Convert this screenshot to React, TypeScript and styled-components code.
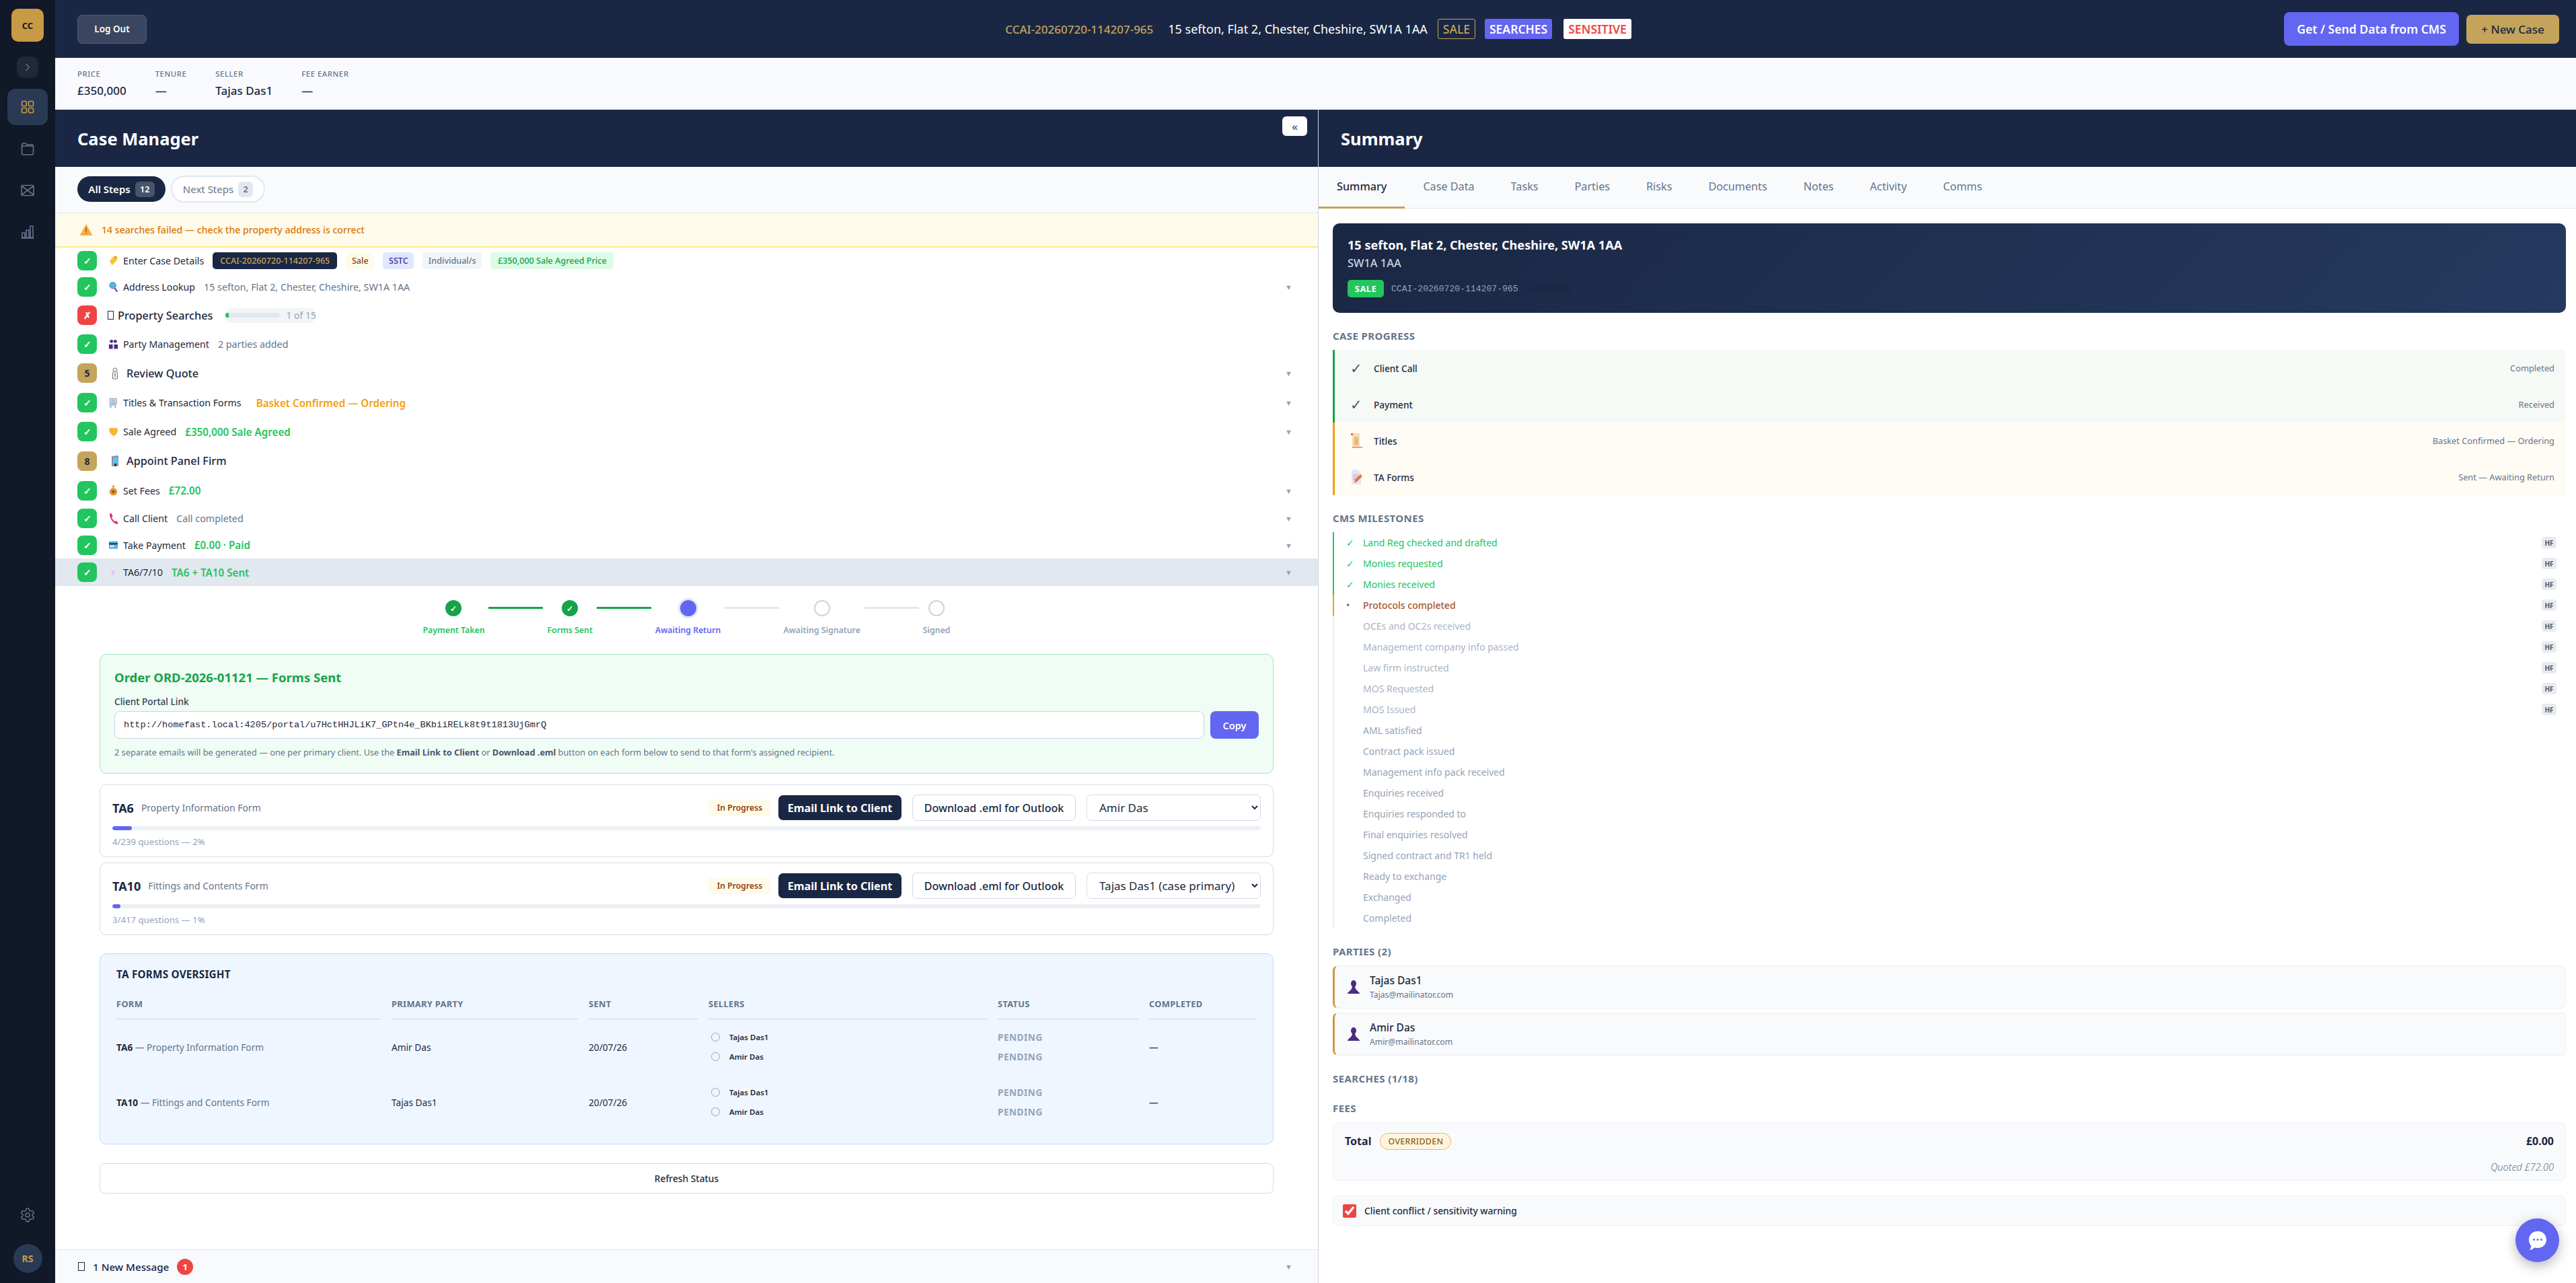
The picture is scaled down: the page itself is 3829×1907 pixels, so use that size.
import React from 'react';
import styled, { createGlobalStyle } from 'styled-components';
import { ChevronRight, Settings } from 'lucide-react';

const SANS = '"Noto Sans", "Open Sans", Arial, sans-serif';
const MONO = '"Liberation Mono", "DejaVu Sans Mono", monospace';
const NAVY = '#1a2744';
const GOLD = '#c4a35a';
const INDIGO = '#6366f1';

const Global = createGlobalStyle`
  html, body { margin: 0; padding: 0; height: 100%; background: #fff; }
  body { font-family: ${SANS}; font-size: 14px; color: #1e293b; overflow: hidden; }
  * { box-sizing: border-box; }
`;

const Shell = styled.div`display: flex; width: 100vw; height: 100vh; overflow: hidden;`;
const Side = styled.aside`
  width: 82px; flex: none; background: #111827; display: flex; flex-direction: column; align-items: center; padding: 13px 0 15px;
`;
const Logo = styled.div`
  width: 48px; height: 49px; border-radius: 10px; background: #c99a45; color: #111827; font-weight: 700; font-size: 13px;
  display: flex; align-items: center; justify-content: center;
`;
const Toggle = styled.div`
  width: 32px; height: 32px; margin-top: 22px; border-radius: 10px; background: #1f2937; color: #64748b; display: flex; align-items: center; justify-content: center;
`;
const NavList = styled.nav`display: flex; flex-direction: column; gap: 8px; margin-top: 16px;`;
const NavItem = styled.div<{ $active?: boolean }>`
  width: 60px; height: 54px; border-radius: 12px; display: flex; align-items: center; justify-content: center;
  background: ${p => (p.$active ? '#2a3a55' : 'transparent')}; color: ${p => (p.$active ? '#c99a45' : '#64748b')};
`;
const SideFoot = styled.div`margin-top: auto; display: flex; flex-direction: column; align-items: center; gap: 31px; color: #64748b;`;
const Avatar = styled.div`
  width: 43px; height: 43px; border-radius: 50%; background: #2a3a55; color: #c99a45; font-weight: 700; font-size: 14px; display: flex; align-items: center; justify-content: center;
`;

const Body = styled.div`flex: 1; min-width: 0; display: flex; flex-direction: column;`;
const TopBar = styled.header`
  height: 86px; flex: none; background: ${NAVY}; display: flex; align-items: center; padding: 0 25px 0 33px;
`;
const TopSide = styled.div<{ $end?: boolean }>`
  flex: 1; display: flex; align-items: center; gap: 11px; justify-content: ${p => (p.$end ? 'flex-end' : 'flex-start')};
`;
const LogOut = styled.button`
  width: 103px; height: 43px; border-radius: 7px; background: #3a465f; border: 1.5px solid #515c74; color: #fff; font: 600 13.5px ${SANS}; padding: 0;
`;
const TopCenter = styled.div`display: flex; align-items: center; color: #fff; white-space: nowrap;`;
const TopRef = styled.span`color: ${GOLD}; font-size: 17px; font-weight: 500; margin-right: 22px;`;
const TopAddr = styled.span`font-size: 18px; margin-right: 15px;`;
const TopPill = styled.span<{ $kind: 'sale' | 'search' | 'sens' }>`
  height: 30px; display: inline-flex; align-items: center; justify-content: center; padding: 0 7px; border-radius: 3px; margin-right: ${p => (p.$kind === 'sens' ? 0 : p.$kind === 'search' ? 17 : 14)}px;
  font-size: 17.5px; font-weight: ${p => (p.$kind === 'sale' ? 500 : 600)};
  color: ${p => (p.$kind === 'sale' ? GOLD : p.$kind === 'search' ? '#fff' : '#ef4444')};
  background: ${p => (p.$kind === 'sale' ? 'transparent' : p.$kind === 'search' ? INDIGO : '#fff')};
  border: ${p => (p.$kind === 'sale' ? `1px solid ${GOLD}` : 'none')};
`;
const CmsButton = styled.button`
  width: 260px; height: 50px; border: none; border-radius: 8px; background: ${INDIGO}; color: #fff; font: 600 17.6px ${SANS}; padding: 0;
`;
const NewCase = styled.button`
  width: 138px; height: 43px; border: none; border-radius: 7px; background: ${GOLD}; color: ${NAVY}; font: 500 17px ${SANS}; padding: 0;
`;

const InfoBar = styled.section`
  height: 77px; flex: none; background: #f8faff; display: flex; gap: 43px; padding: 16px 0 0 33px;
`;
const InfoCol = styled.div`display: flex; flex-direction: column;`;
const InfoLabel = styled.span`font-size: 11.4px; line-height: 16px; letter-spacing: 0.5px; color: #64748b; font-weight: 500;`;
const InfoValue = styled.span`font-size: 17px; line-height: 24px; margin-top: 5px; font-weight: 500; color: #1e293b;`;

const Main = styled.main`flex: 1; min-height: 0; display: flex;`;
const LeftPanel = styled.section`width: 1878px; flex: none; display: flex; flex-direction: column; border-right: 1px solid #cbd5e1;`;
const RightPanel = styled.section`flex: 1; min-width: 0; display: flex; flex-direction: column;`;
const PanelHead = styled.div`
  height: 85px; flex: none; background: ${NAVY}; display: flex; justify-content: space-between; padding: 0 16px 0 33px;
`;
const PanelTitle = styled.h2`margin: 0; color: #fff; font-size: 25.500px; font-weight: 700; line-height: 86px;`;
const Collapse = styled.button`
  width: 37px; height: 29px; margin-top: 10px; background: #fff; border: none; border-radius: 6px; color: #475569; font: 500 16px ${SANS}; padding: 0;
`;
const FilterBar = styled.div`
  height: 69px; flex: none; background: #f8fafc; border-bottom: 1px solid #e2e8f0; display: flex; align-items: center; gap: 8px; padding: 0 33px 2px;
`;
const Pill = styled.div<{ $on?: boolean }>`
  height: ${p => (p.$on ? 38 : 40)}px; width: ${p => (p.$on ? 131 : 140)}px; border-radius: 20px; display: flex; align-items: center; justify-content: center; gap: 7px;
  background: ${p => (p.$on ? NAVY : '#fff')}; color: ${p => (p.$on ? '#fff' : '#64748b')}; font-weight: ${p => (p.$on ? 600 : 400)}; font-size: 15px;
  border: ${p => (p.$on ? 'none' : '2px solid #e2e8f0')};
`;
const PillCount = styled.span<{ $on?: boolean }>`
  width: ${p => (p.$on ? 29 : 22)}px; height: 23px; border-radius: 6px; font-size: 12.500px; font-weight: 600; display: flex; align-items: center; justify-content: center;
  background: ${p => (p.$on ? '#475569' : '#e2e8f0')}; color: ${p => (p.$on ? '#fff' : '#64748b')};
`;
const Alert = styled.div`
  height: 51px; flex: none; background: #fffbeb; border-bottom: 2px solid #fde68a; display: flex; align-items: center; gap: 13px; padding: 0 36px; color: #d97706; font-size: 14.1px; font-weight: 500;
`;
const Scroll = styled.div`flex: 1; min-height: 0; overflow: hidden; display: flex; flex-direction: column;`;

const StepRow = styled.div<{ $h: number; $on?: boolean }>`
  height: ${p => p.$h}px; flex: none; display: flex; align-items: center; padding: 0 38px 0 33px; background: ${p => (p.$on ? '#e2e8f0' : 'transparent')};
`;
const StepBadge = styled.span<{ $c: 'ok' | 'bad' | 'num' }>`
  width: 29px; height: 29px; flex: none; border-radius: 8px; display: flex; align-items: center; justify-content: center; font-weight: 700; font-size: 14px;
  color: ${p => (p.$c === 'num' ? NAVY : '#fff')};
  background: ${p => (p.$c === 'ok' ? '#22c55e' : p.$c === 'bad' ? '#ef4444' : GOLD)};
`;
const StepIcon = styled.span<{ $big?: boolean }>`
  width: ${p => (p.$big ? 19 : 15)}px; height: 18px; margin: 0 ${p => (p.$big ? 8 : 7)}px 0 17px; display: flex; align-items: center; justify-content: center; flex: none;
`;
const TofuSlot = styled.span`width: 9px; margin: 0 6px 0 16px; display: flex; flex: none; color: ${NAVY};`;
const Tofu = styled.span<{ $size?: number }>`
  width: ${p => p.$size ?? 9}px; height: 13px; border: 1.5px solid currentColor; flex: none; display: inline-block;
`;
const StepTitle = styled.span<{ $big?: boolean }>`
  font-size: ${p => (p.$big ? 16.3 : 14.2)}px; font-weight: ${p => (p.$big ? 500 : 400)}; color: #1e293b; white-space: nowrap;
`;
const StepNote = styled.span<{ $tone?: 'green' | 'amber'; $gap?: number }>`
  margin-left: ${p => p.$gap ?? 13}px; white-space: nowrap;
  font-size: ${p => (p.$tone ? 15.2 : 14.3)}px;
  font-weight: ${p => (p.$tone ? 600 : 400)};
  color: ${p => (p.$tone === 'green' ? '#22c55e' : p.$tone === 'amber' ? '#f59e0b' : '#64748b')};
`;
const Tags = styled.div`display: flex; gap: 13px; margin-left: 13px;`;
const Tag = styled.span<{ $bg: string; $fg: string; $w: number }>`
  height: 25px; width: ${p => p.$w}px; border-radius: 5px; display: flex; align-items: center; justify-content: center; font-size: 12.6px; font-weight: 500; white-space: nowrap;
  background: ${p => p.$bg}; color: ${p => p.$fg};
`;
const MiniProgress = styled.div`
  height: 22px; width: 133px; margin-left: 19px; border-radius: 8px; background: #f1f5f9; display: flex; align-items: center; gap: 9px; color: #94a3b8; font-size: 14px; white-space: nowrap;
`;
const MiniTrack = styled.div`width: 81px; height: 7px; flex: none; border-radius: 4px; background: #e2e8f0; overflow: hidden;`;
const MiniFill = styled.div`width: 5px; height: 100%; background: #22c55e;`;
const Caret = styled.span`margin-left: auto; color: #94a3b8; font-size: 11px;`;

const Stepper = styled.div`display: flex; justify-content: center; padding-top: 21px; height: 101px; flex: none;`;
const StepItem = styled.div`display: flex; flex-direction: column; align-items: center; padding: 0 6px;`;
const Dot = styled.span<{ $s: 'done' | 'now' | 'todo' }>`
  width: 24px; height: 24px; border-radius: 50%; display: flex; align-items: center; justify-content: center; color: #fff; font-size: 12px; font-weight: 700;
  background: ${p => (p.$s === 'done' ? '#16a34a' : p.$s === 'now' ? INDIGO : '#fff')};
  border: ${p => (p.$s === 'todo' ? '2px solid #cbd5e1' : 'none')};
  box-shadow: ${p => (p.$s === 'now' ? '0 0 0 3px #e0e7ff' : 'none')};
`;
const DotLabel = styled.span<{ $s: 'done' | 'now' | 'todo' }>`
  margin-top: 12px; font-size: 12.3px; font-weight: 600; white-space: nowrap;
  color: ${p => (p.$s === 'done' ? '#22c55e' : p.$s === 'now' ? INDIGO : '#94a3b8')};
`;
const Link = styled.span<{ $done?: boolean }>`
  width: 81px; height: 3px; margin-top: 10px; flex: none; background: ${p => (p.$done ? '#16a34a' : '#e2e8f0')};
`;

const Cards = styled.div`padding: 0 66px; display: flex; flex-direction: column;`;
const OrderCard = styled.div`
  height: 178px; background: #f0fdf4; border: 1.5px solid #a7e3bd; border-radius: 10px; padding: 21px 21px 0 21px;
`;
const OrderTitle = styled.h3`margin: 0; font-size: 18.5px; line-height: 26px; font-weight: 700; color: #16a34a;`;
const FieldLabel = styled.div`margin-top: 13px; font-size: 13.6px; line-height: 20px; font-weight: 500; color: #334155;`;
const LinkRow = styled.div`display: flex; gap: 9px; margin-top: 4px;`;
const LinkInput = styled.input`
  flex: 1; height: 41px; border: 1.5px solid #cbd5e1; border-radius: 8px; background: #fff; padding: 0 13px; font: 13.6px ${MONO}; color: #1e293b;
`;
const CopyBtn = styled.button`
  width: 72px; height: 41px; border: none; border-radius: 8px; background: ${INDIGO}; color: #fff; font: 600 14.5px ${SANS}; padding: 0;
`;
const Hint = styled.p`margin: 10px 0 0; font-size: 12.75px; line-height: 20px; color: #64748b; b { font-weight: 700; color: #475569; }`;
const FormCard = styled.div<{ $mt: number }>`
  height: 108px; margin-top: ${p => p.$mt}px; border: 1.5px solid #d5dae3; border-radius: 10px; padding: 14px 18px 0;
`;
const FormHead = styled.div`display: flex; align-items: center; height: 39px;`;
const FormCode = styled.span`font-size: 18px; font-weight: 700; color: ${NAVY};`;
const FormName = styled.span`margin-left: 11px; font-size: 14px; color: #64748b;`;
const FormActions = styled.div`margin-left: auto; display: flex; align-items: center;`;
const Status = styled.span`
  width: 93px; height: 25px; margin-right: 11px; border-radius: 5px; background: #fffbeb; color: #92400e; font-size: 12.2px; font-weight: 600; display: flex; align-items: center; justify-content: center;
`;
const EmailBtn = styled.button`
  width: 183px; height: 37px; margin-right: 16px; border: none; border-radius: 7px; background: ${NAVY}; color: #fff; font: 700 16.2px ${SANS}; padding: 0;
`;
const EmlBtn = styled.button`
  width: 243px; height: 39px; margin-right: 16px; border: 1.5px solid #d5dae3; border-radius: 7px; background: #fff; color: ${NAVY}; font: 500 16.1px ${SANS}; padding: 0;
`;
const Recipient = styled.select`
  width: 259px; height: 39px; border: 1.5px solid #d5dae3; border-radius: 7px; background: #fff; color: #1e293b; font: 400 17px ${SANS}; padding: 0 14px;
`;
const Track = styled.div`height: 6px; margin-top: 8px; border-radius: 3px; background: #edf0f4; overflow: hidden;`;
const Fill = styled.div`height: 100%; border-radius: 3px; background: ${INDIGO};`;
const Questions = styled.div`margin-top: 7px; font-size: 13.2px; line-height: 20px; color: #94a3b8;`;

const Oversight = styled.div`
  height: 284px; margin-top: 27px; background: #eff6ff; border: 1.5px solid #bfdbfe; border-radius: 10px; padding: 20px 24px 0;
`;
const OverTitle = styled.h4`margin: 0; font-size: 15.3px; line-height: 20px; font-weight: 700; color: ${NAVY}; letter-spacing: 0.2px;`;
const OverGrid = styled.div`
  display: grid; grid-template-columns: 393px 277px 162px 414px 209px 1fr; column-gap: 16px; margin-top: 25px;
`;
const Th = styled.div`
  height: 32px; border-bottom: 1.5px solid #cbd5e1; font-size: 12.9px; font-weight: 700; letter-spacing: 0.3px; color: #64748b; padding-top: 0;
`;
const Td = styled.div`height: 82px; display: flex; align-items: center; font-size: 13.7px; color: #1e293b; white-space: nowrap;`;
const TdGrey = styled.span`color: #64748b;`;
const Stack = styled.div`display: flex; flex-direction: column; gap: 9px; justify-content: center; height: 82px;`;
const Seller = styled.div`height: 20px; display: flex; align-items: center; gap: 11px; font-size: 11.5px; font-weight: 600; color: #1e293b;`;
const Ring = styled.span`
  width: 20px; height: 20px; border-radius: 50%; background: #f1f5f9; display: flex; align-items: center; justify-content: center;
  &::after { content: ''; width: 11px; height: 11px; border: 1px solid #94a3b8; border-radius: 50%; }
`;
const Pending = styled.div`height: 20px; display: flex; align-items: center; font-size: 13.6px; font-weight: 700; letter-spacing: 0.5px; color: #94a3b8;`;
const Refresh = styled.button`
  height: 45px; margin-top: 28px; width: 100%; background: #fff; border: 1.5px solid #d5dae3; border-radius: 8px; color: #1e293b; font: 500 13.8px ${SANS};
`;
const MsgBar = styled.div`
  height: 50px; margin-top: auto; flex: none; background: #f8fafc; border-top: 1px solid #e2e8f0; display: flex; align-items: center; padding: 0 38px 0 34px; color: ${NAVY}; font-size: 15.2px; font-weight: 500;
`;
const MsgText = styled.span`margin-left: 12px;`;
const MsgCount = styled.span`
  width: 24px; height: 24px; margin-left: 12px; border-radius: 50%; background: #ef4444; color: #fff; font-size: 13px; font-weight: 700; display: flex; align-items: center; justify-content: center;
`;

const Tabs = styled.div`height: 62px; flex: none; background: #f8fafc; border-bottom: 1px solid #e2e8f0; display: flex;`;
const TabItem = styled.div<{ $on?: boolean }>`
  height: 62px; padding: 0 27px 1px; display: flex; align-items: center; font-size: 16.2px; font-weight: ${p => (p.$on ? 500 : 400)};
  color: ${p => (p.$on ? '#1e293b' : '#64748b')}; border-bottom: 3px solid ${p => (p.$on ? GOLD : 'transparent')};
`;
const SummaryBody = styled.div`flex: 1; min-height: 0; overflow: hidden; padding: 22px 15px 0 21px;`;
const Hero = styled.div`
  height: 133px; border-radius: 10px; background: linear-gradient(135deg, ${NAVY}, #253a5f); padding: 19px 22px 0;
`;
const HeroTitle = styled.div`font-size: 18.1px; line-height: 26px; font-weight: 700; color: #fff;`;
const HeroSub = styled.div`font-size: 16.4px; line-height: 24px; margin-top: 2px; font-weight: 500; color: #cbd5e1;`;
const HeroMeta = styled.div`display: flex; align-items: center; gap: 11px; margin-top: 13px;`;
const SaleBadge = styled.span`
  width: 54px; height: 26px; border-radius: 5px; background: #22c55e; color: #fff; font-size: 13px; font-weight: 700; letter-spacing: 0.4px; display: flex; align-items: center; justify-content: center;
`;
const HeroRef = styled.span`font: 13.1px ${MONO}; color: #94a3b8;`;
const HeroPrice = styled.span`font-size: 16px; font-weight: 700; color: ${NAVY};`;
const SectionLabel = styled.div`
  height: 20px; margin: 24px 0 11px; font-size: 15px; line-height: 20px; font-weight: 700; letter-spacing: 0.4px; color: #64748b;
`;
const ProgressRow = styled.div<{ $tone: 'green' | 'amber' }>`
  height: 54px; display: flex; align-items: center; padding: 0 17px 0 23px; font-size: 13.6px; font-weight: 500; color: #1e293b;
  border-left: 3px solid ${p => (p.$tone === 'green' ? '#16a34a' : '#f59e0b')};
  background: ${p => (p.$tone === 'green' ? '#f5faf6' : '#fffcf5')};
`;
const ProgressIcon = styled.span`width: 35px; flex: none; display: flex; color: #475569; font-size: 21px; font-weight: 400;`;
const ProgressNote = styled.span`margin-left: auto; font-size: 12.8px; font-weight: 400; color: #64748b;`;
const Mile = styled.div<{ $c: string }>`
  height: 31px; display: flex; align-items: center; border-left: 2px solid ${p => p.$c}; padding-right: 14px; font-size: 14px;
`;
const MileMark = styled.span<{ $tone: string }>`width: 43px; flex: none; padding-left: 18px; color: ${p => p.$tone}; font-size: 14px;`;
const MileText = styled.span<{ $tone: string; $strong?: boolean }>`color: ${p => p.$tone}; font-weight: ${p => (p.$strong ? 500 : 400)};`;
const HF = styled.span`
  margin-left: auto; width: 22px; height: 17px; border-radius: 4px; background: #e8ecf1; color: #475569; font-size: 10px; font-weight: 700; display: flex; align-items: center; justify-content: center;
`;
const Party = styled.div`
  height: 64px; margin-bottom: 6px; display: flex; align-items: center; background: #f8fafc; border: 1px solid #edf0f4; border-left: 3px solid #c99a45; border-radius: 8px; padding-left: 19px;
`;
const PartyText = styled.div`margin-left: 15px; display: flex; flex-direction: column;`;
const PartyName = styled.span`font-size: 15.5px; line-height: 24px; font-weight: 500; color: #1e293b;`;
const PartyMail = styled.span`font-size: 12.2px; line-height: 20px; color: #64748b;`;
const FeeCard = styled.div`
  height: 87px; background: #f8fafc; border: 1px solid #edf0f4; border-radius: 8px; padding: 14px 17px 0;
`;
const FeeTop = styled.div`display: flex; align-items: center; height: 26px;`;
const FeeTotal = styled.span`font-size: 16px; font-weight: 700; color: ${NAVY};`;
const Overridden = styled.span`
  width: 106px; height: 25px; margin-left: 13px; border-radius: 13px; border: 1px solid #e8b95a; background: #fef5e0; color: #92610e; font-size: 12.4px; font-weight: 500; letter-spacing: 0.3px; display: flex; align-items: center; justify-content: center;
`;
const FeeAmount = styled.span`margin-left: auto; font-size: 16px; font-weight: 700; color: ${NAVY};`;
const Quoted = styled.div`margin-top: 15px; text-align: right; font-size: 14.5px; font-style: italic; font-weight: 300; color: #64748b;`;
const WarnCard = styled.label`
  height: 45px; margin-top: 22px; display: flex; align-items: center; gap: 12px; background: #f8fafc; border: 1px solid #edf0f4; border-radius: 8px; padding-left: 14px; font-size: 13.8px; font-weight: 500; color: #1e293b;
`;
const WarnBox = styled.input`width: 20px; height: 20px; margin: 0; accent-color: #ef4444;`;
const Fab = styled.button`
  position: fixed; right: 25px; bottom: 31px; width: 65px; height: 65px; border: none; border-radius: 50%; background: ${INDIGO}; box-shadow: 0 6px 18px rgba(15, 23, 42, 0.3); display: flex; align-items: center; justify-content: center; padding: 0;
`;

const Ic = ({ children, w = 22, h = 22, vb = '0 0 24 24' }: { children: React.ReactNode; w?: number; h?: number; vb?: string }) => (
  <svg width={w} height={h} viewBox={vb} fill="none" stroke="currentColor" strokeWidth="1.6" strokeLinecap="round" strokeLinejoin="round">{children}</svg>
);
const GridIcon = () => (
  <Ic w={24} h={24}>
    <rect x="3.5" y="3.5" width="7" height="7" rx="1.5" /><rect x="13.5" y="3.5" width="7" height="7" rx="1.5" />
    <rect x="3.5" y="13.5" width="7" height="7" rx="1.5" /><rect x="13.5" y="13.5" width="7" height="7" rx="1.5" />
  </Ic>
);
const FolderIcon = () => (
  <Ic w={24} h={24}><path d="M4 8V5.5A1.5 1.5 0 0 1 5.5 4h3.5l2 2h7.5A1.5 1.5 0 0 1 20 7.5V8" /><path d="M3.5 8h17v11a2 2 0 0 1-2 2h-13a2 2 0 0 1-2-2z" /></Ic>
);
const MailIcon = () => (
  <Ic w={24} h={24}><rect x="3" y="4.5" width="18" height="15" rx="1.5" /><path d="M3 5.5l18 13M21 5.5L3 18.5" /></Ic>
);
const ChartIcon = () => (
  <Ic w={24} h={24}><path d="M3 21h18" /><rect x="4" y="13" width="4" height="7" /><rect x="10" y="9" width="4" height="11" /><rect x="16" y="3" width="4" height="17" /></Ic>
);
const Warn = () => (
  <svg width="20" height="19" viewBox="0 0 20 19"><path d="M10 1L19.5 18H.5z" fill="#f7b046" /><rect x="9.2" y="6" width="1.6" height="7" fill="#b3541e" /><rect x="9.2" y="14.3" width="1.6" height="1.6" fill="#b3541e" /></svg>
);
const E = ({ kind }: { kind: string }) => {
  const map: Record<string, React.ReactNode> = {
    tag: <><path d="M2 9L9 1h5v6l-8 9z" fill="#f9c23c" /><circle cx="11.5" cy="3.5" r="1.2" fill="#e8604c" /></>,
    search: <><circle cx="7" cy="6" r="5" fill="#5ab4e8" stroke="#3a7fb0" /><path d="M10 10l4 6" stroke="#7d4a9e" strokeWidth="2.6" /></>,
    people: <><circle cx="5" cy="4" r="2.6" fill="#4a2c82" /><circle cx="11" cy="4" r="2.6" fill="#4a2c82" /><path d="M1 16V9h6v7zM9 16V9h6v7z" fill="#4a2c82" /></>,
    person: <><circle cx="8" cy="4" r="3" fill="#fff" stroke="#777" /><path d="M4.5 17V9a3.5 3.5 0 0 1 7 0v8z" fill="#f3f3f3" stroke="#777" /><path d="M8 8v6" stroke="#555" /></>,
    cart: <><path d="M2 2h11v8H3z" fill="#dfe6ee" stroke="#8a98a8" /><path d="M4 5h8M4 8h8M6 2v8M9 2v8" stroke="#8a98a8" strokeWidth=".7" /><path d="M1 12h12" stroke="#6aa0d8" strokeWidth="1.4" /><circle cx="4" cy="15" r="1.3" fill="#6aa0d8" /><circle cx="11" cy="15" r="1.3" fill="#6aa0d8" /></>,
    shake: <path d="M1 4l5-2 3 1 5-1 1 5-2 5-4 4-4-3-3-4z" fill="#f9b52c" />,
    building: <><path d="M3 2l10-1v16H3z" fill="#8796a8" /><path d="M5 4h7v10H5z" fill="#58c4ef" /><path d="M7 13h3v4H7z" fill="#333" /></>,
    bag: <><path d="M6 1h4l-1 4H7z" fill="#e0a030" /><ellipse cx="8" cy="11" rx="6" ry="6" fill="#e09030" /><circle cx="8" cy="11" r="2.2" fill="#8a5a20" /></>,
    phone: <path d="M2 1l3-.5 2 5L5.5 7.5c1 2.5 3 4.8 5 5.8l2-1 3 3-1 2.5C8 17 2 9 2 1z" fill="#e0337a" />,
    card: <><rect x="1" y="3" width="14" height="12" rx="1" fill="#5ab4e8" /><rect x="1" y="6" width="14" height="2.4" fill="#2a3a55" /><rect x="3" y="10" width="6" height="2" fill="#fff" /></>,
    doc: <><path d="M3 1h7l3 3v13H3z" fill="#ece4f4" /><path d="M5 7h5M5 9.500h5M5 12h4" stroke="#b9b2c4" /></>,
  };
  return <svg width="16" height="18" viewBox="0 0 16 18">{map[kind]}</svg>;
};
const Scroll2 = () => (
  <svg width="20" height="24" viewBox="0 0 20 24"><path d="M3 1h11v20H3z" fill="#fbd9a8" /><path d="M1 1h3v3H1z" fill="#e8694a" /><path d="M3 21h15v2H3z" fill="#f59a7a" /><path d="M6 8h6M6 11h6M6 14h6M6 17h6" stroke="#b9764a" /></svg>
);
const DocPen = () => (
  <svg width="20" height="24" viewBox="0 0 20 24"><path d="M2 1h9l5 5v17H2z" fill="#e6e4f2" /><path d="M4 9h8M4 12h8M4 15h6" stroke="#a9a6b8" /><path d="M6 21l1-5 8-8 3 3-8 8z" fill="#f2703a" /></svg>
);
const Bust = () => (
  <svg width="18" height="20" viewBox="0 0 18 20"><ellipse cx="9" cy="5" rx="4" ry="5" fill="#4a2c82" /><path d="M7 9h4l1 4 6 6v1H0v-1l6-6z" fill="#4a2c82" /></svg>
);

type Row = { h: number; badge: 'ok' | 'bad' | 'num'; mark: string; icon?: string; title: string; big?: boolean; note?: string; tone?: 'green' | 'amber'; gap?: number; caret?: boolean; on?: boolean; tags?: boolean; progress?: boolean };
const rows: Row[] = [
  { h: 39, badge: 'ok', mark: '✓', icon: 'tag', title: 'Enter Case Details', tags: true },
  { h: 39, badge: 'ok', mark: '✓', icon: 'search', title: 'Address Lookup', note: '15 sefton, Flat 2, Chester, Cheshire, SW1A 1AA', caret: true },
  { h: 45, badge: 'bad', mark: '✗', title: 'Property Searches', big: true, progress: true },
  { h: 41, badge: 'ok', mark: '✓', icon: 'people', title: 'Party Management', note: '2 parties added' },
  { h: 45, badge: 'num', mark: '5', icon: 'person', title: 'Review Quote', big: true, caret: true },
  { h: 43, badge: 'ok', mark: '✓', icon: 'cart', title: 'Titles & Transaction Forms', note: 'Basket Confirmed — Ordering', tone: 'amber', gap: 22, caret: true },
  { h: 43, badge: 'ok', mark: '✓', icon: 'shake', title: 'Sale Agreed', note: '£350,000 Sale Agreed', tone: 'green', caret: true },
  { h: 44, badge: 'num', mark: '8', icon: 'building', title: 'Appoint Panel Firm', big: true },
  { h: 44, badge: 'ok', mark: '✓', icon: 'bag', title: 'Set Fees', note: '£72.00', tone: 'green', caret: true },
  { h: 39, badge: 'ok', mark: '✓', icon: 'phone', title: 'Call Client', note: 'Call completed', caret: true },
  { h: 40, badge: 'ok', mark: '✓', icon: 'card', title: 'Take Payment', note: '£0.00 · Paid', tone: 'green', caret: true },
  { h: 41, badge: 'ok', mark: '✓', icon: 'doc', title: 'TA6/7/10', note: 'TA6 + TA10 Sent', tone: 'green', caret: true, on: true },
];
const flow: { s: 'done' | 'now' | 'todo'; label: string }[] = [
  { s: 'done', label: 'Payment Taken' }, { s: 'done', label: 'Forms Sent' }, { s: 'now', label: 'Awaiting Return' }, { s: 'todo', label: 'Awaiting Signature' }, { s: 'todo', label: 'Signed' },
];
const forms = [
  { code: 'TA6', name: 'Property Information Form', width: 29, q: '4/239 questions — 2%', who: 'Amir Das', mt: 16 },
  { code: 'TA10', name: 'Fittings and Contents Form', width: 12, q: '3/417 questions — 1%', who: 'Tajas Das1 (case primary)', mt: 8 },
];
const oversight = [
  { code: 'TA6', name: 'Property Information Form', primary: 'Amir Das' },
  { code: 'TA10', name: 'Fittings and Contents Form', primary: 'Tajas Das1' },
];
const tabs = ['Summary', 'Case Data', 'Tasks', 'Parties', 'Risks', 'Documents', 'Notes', 'Activity', 'Comms'];
const miles = ['Land Reg checked and drafted', 'Monies requested', 'Monies received', 'Protocols completed', 'OCEs and OC2s received', 'Management company info passed', 'Law firm instructed', 'MOS Requested', 'MOS Issued', 'AML satisfied', 'Contract pack issued', 'Management info pack received', 'Enquiries received', 'Enquiries responded to', 'Final enquiries resolved', 'Signed contract and TR1 held', 'Ready to exchange', 'Exchanged', 'Completed'];

export default function App() {
  return (
    <Shell>
      <Global />
      <Side>
        <Logo>CC</Logo>
        <Toggle><ChevronRight size={20} strokeWidth={1.5} /></Toggle>
        <NavList>
          <NavItem $active><GridIcon /></NavItem>
          <NavItem><FolderIcon /></NavItem>
          <NavItem><MailIcon /></NavItem>
          <NavItem><ChartIcon /></NavItem>
        </NavList>
        <SideFoot>
          <Settings size={24} strokeWidth={1.5} />
          <Avatar>RS</Avatar>
        </SideFoot>
      </Side>
      <Body>
        <TopBar>
          <TopSide><LogOut>Log Out</LogOut></TopSide>
          <TopCenter>
            <TopRef>CCAI-20260720-114207-965</TopRef>
            <TopAddr>15 sefton, Flat 2, Chester, Cheshire, SW1A 1AA</TopAddr>
            <TopPill $kind="sale">SALE</TopPill>
            <TopPill $kind="search">SEARCHES</TopPill>
            <TopPill $kind="sens">SENSITIVE</TopPill>
          </TopCenter>
          <TopSide $end>
            <CmsButton>Get / Send Data from CMS</CmsButton>
            <NewCase>+ New Case</NewCase>
          </TopSide>
        </TopBar>
        <InfoBar>
          <InfoCol><InfoLabel>PRICE</InfoLabel><InfoValue>£350,000</InfoValue></InfoCol>
          <InfoCol><InfoLabel>TENURE</InfoLabel><InfoValue>—</InfoValue></InfoCol>
          <InfoCol><InfoLabel>SELLER</InfoLabel><InfoValue>Tajas Das1</InfoValue></InfoCol>
          <InfoCol><InfoLabel>FEE EARNER</InfoLabel><InfoValue>—</InfoValue></InfoCol>
        </InfoBar>
        <Main>
          <LeftPanel>
            <PanelHead><PanelTitle>Case Manager</PanelTitle><Collapse>«</Collapse></PanelHead>
            <FilterBar>
              <Pill $on>All Steps <PillCount $on>12</PillCount></Pill>
              <Pill>Next Steps <PillCount>2</PillCount></Pill>
            </FilterBar>
            <Alert><Warn />14 searches failed — check the property address is correct</Alert>
            <Scroll>
              {rows.map(r => (
                <StepRow key={r.title} $h={r.h} $on={r.on}>
                  <StepBadge $c={r.badge}>{r.mark}</StepBadge>
                  {r.icon ? <StepIcon $big={r.big}><E kind={r.icon} /></StepIcon> : <TofuSlot><Tofu /></TofuSlot>}
                  <StepTitle $big={r.big}>{r.title}</StepTitle>
                  {r.note && <StepNote $tone={r.tone} $gap={r.gap}>{r.note}</StepNote>}
                  {r.tags && (
                    <Tags>
                      <Tag $bg={NAVY} $fg={GOLD} $w={185}>CCAI-20260720-114207-965</Tag>
                      <Tag $bg="#fffbeb" $fg="#92400e" $w={42}>Sale</Tag>
                      <Tag $bg="#e0e7ff" $fg="#3730a3" $w={46}>SSTC</Tag>
                      <Tag $bg="#f1f5f9" $fg="#64748b" $w={88}>Individual/s</Tag>
                      <Tag $bg="#dcfce7" $fg="#16a34a" $w={183}>£350,000 Sale Agreed Price</Tag>
                    </Tags>
                  )}
                  {r.progress && <MiniProgress><MiniTrack><MiniFill /></MiniTrack>1 of 15</MiniProgress>}
                  {r.caret && <Caret>▼</Caret>}
                </StepRow>
              ))}
              <Stepper>
                {flow.map((f, i) => (
                  <React.Fragment key={f.label}>
                    {i > 0 && <Link $done={i < 3} />}
                    <StepItem><Dot $s={f.s}>{f.s === 'done' ? '✓' : ''}</Dot><DotLabel $s={f.s}>{f.label}</DotLabel></StepItem>
                  </React.Fragment>
                ))}
              </Stepper>
              <Cards>
                <OrderCard>
                  <OrderTitle>Order ORD-2026-01121 — Forms Sent</OrderTitle>
                  <FieldLabel>Client Portal Link</FieldLabel>
                  <LinkRow>
                    <LinkInput readOnly value="http://homefast.local:4205/portal/u7HctHHJLiK7_GPtn4e_BKbiiRELk8t9t1813UjGmrQ" />
                    <CopyBtn>Copy</CopyBtn>
                  </LinkRow>
                  <Hint>2 separate emails will be generated — one per primary client. Use the <b>Email Link to Client</b> or <b>Download .eml</b> button on each form below to send to that form's assigned recipient.</Hint>
                </OrderCard>
                {forms.map(f => (
                  <FormCard key={f.code} $mt={f.mt}>
                    <FormHead>
                      <FormCode>{f.code}</FormCode>
                      <FormName>{f.name}</FormName>
                      <FormActions>
                        <Status>In Progress</Status>
                        <EmailBtn>Email Link to Client</EmailBtn>
                        <EmlBtn>Download .eml for Outlook</EmlBtn>
                        <Recipient defaultValue={f.who}><option>{f.who}</option></Recipient>
                      </FormActions>
                    </FormHead>
                    <Track><Fill style={{ width: f.width }} /></Track>
                    <Questions>{f.q}</Questions>
                  </FormCard>
                ))}
                <Oversight>
                  <OverTitle>TA FORMS OVERSIGHT</OverTitle>
                  <OverGrid>
                    {['FORM', 'PRIMARY PARTY', 'SENT', 'SELLERS', 'STATUS', 'COMPLETED'].map(h => <Th key={h}>{h}</Th>)}
                    {oversight.map(o => (
                      <React.Fragment key={o.code}>
                        <Td><b>{o.code}</b>&nbsp;<TdGrey>— {o.name}</TdGrey></Td>
                        <Td>{o.primary}</Td>
                        <Td>20/07/26</Td>
                        <Stack>
                          <Seller><Ring />Tajas Das1</Seller>
                          <Seller><Ring />Amir Das</Seller>
                        </Stack>
                        <Stack><Pending>PENDING</Pending><Pending>PENDING</Pending></Stack>
                        <Td>—</Td>
                      </React.Fragment>
                    ))}
                  </OverGrid>
                </Oversight>
                <Refresh>Refresh Status</Refresh>
              </Cards>
              <MsgBar>
                <Tofu $size={10} /><MsgText>1 New Message</MsgText><MsgCount>1</MsgCount><Caret>▼</Caret>
              </MsgBar>
            </Scroll>
          </LeftPanel>
          <RightPanel>
            <PanelHead><PanelTitle>Summary</PanelTitle></PanelHead>
            <Tabs>{tabs.map((t, i) => <TabItem key={t} $on={i === 0}>{t}</TabItem>)}</Tabs>
            <SummaryBody>
              <Hero>
                <HeroTitle>15 sefton, Flat 2, Chester, Cheshire, SW1A 1AA</HeroTitle>
                <HeroSub>SW1A 1AA</HeroSub>
                <HeroMeta><SaleBadge>SALE</SaleBadge><HeroRef>CCAI-20260720-114207-965</HeroRef><HeroPrice>£350,000</HeroPrice></HeroMeta>
              </Hero>
              <SectionLabel>CASE PROGRESS</SectionLabel>
              <ProgressRow $tone="green"><ProgressIcon>✓</ProgressIcon>Client Call<ProgressNote>Completed</ProgressNote></ProgressRow>
              <ProgressRow $tone="green"><ProgressIcon>✓</ProgressIcon>Payment<ProgressNote>Received</ProgressNote></ProgressRow>
              <ProgressRow $tone="amber"><ProgressIcon><Scroll2 /></ProgressIcon>Titles<ProgressNote>Basket Confirmed — Ordering</ProgressNote></ProgressRow>
              <ProgressRow $tone="amber"><ProgressIcon><DocPen /></ProgressIcon>TA Forms<ProgressNote>Sent — Awaiting Return</ProgressNote></ProgressRow>
              <SectionLabel>CMS MILESTONES</SectionLabel>
              {miles.map((m, i) => {
                const tone = i < 3 ? '#22c55e' : i === 3 ? '#a8552a' : i < 9 ? '#a9b4c4' : '#94a3b8';
                return (
                  <Mile key={m} $c={i < 3 ? '#22c55e' : i === 3 ? '#f59e0b' : '#e8ecf1'}>
                    <MileMark $tone={tone}>{i < 3 ? '✓' : i === 3 ? '•' : ''}</MileMark>
                    <MileText $tone={tone} $strong={i === 3}>{m}</MileText>
                    {i < 9 && <HF>HF</HF>}
                  </Mile>
                );
              })}
              <SectionLabel>PARTIES (2)</SectionLabel>
              <Party><Bust /><PartyText><PartyName>Tajas Das1</PartyName><PartyMail>Tajas@mailinator.com</PartyMail></PartyText></Party>
              <Party><Bust /><PartyText><PartyName>Amir Das</PartyName><PartyMail>Amir@mailinator.com</PartyMail></PartyText></Party>
              <SectionLabel>SEARCHES (1/18)</SectionLabel>
              <SectionLabel>FEES</SectionLabel>
              <FeeCard>
                <FeeTop><FeeTotal>Total</FeeTotal><Overridden>OVERRIDDEN</Overridden><FeeAmount>£0.00</FeeAmount></FeeTop>
                <Quoted>Quoted £72.00</Quoted>
              </FeeCard>
              <WarnCard><WarnBox type="checkbox" defaultChecked readOnly />Client conflict / sensitivity warning</WarnCard>
            </SummaryBody>
          </RightPanel>
        </Main>
      </Body>
      <Fab>
        <svg width="30" height="32" viewBox="0 0 30 32"><path d="M15 2c7.500 0 13 5.300 13 12.500S22.500 27 15 27c-1.500 0-3-.2-4.300-.7C9 28 6.500 29.500 3 30c1.400-1.800 2.200-3.800 2.400-6C3 21.700 2 18.400 2 14.500 2 7.300 7.500 2 15 2z" fill="#fff" /><circle cx="9.500" cy="14.500" r="1.500" fill={INDIGO} /><circle cx="15" cy="14.500" r="1.500" fill={INDIGO} /><circle cx="20.500" cy="14.500" r="1.500" fill={INDIGO} /></svg>
      </Fab>
    </Shell>
  );
}
